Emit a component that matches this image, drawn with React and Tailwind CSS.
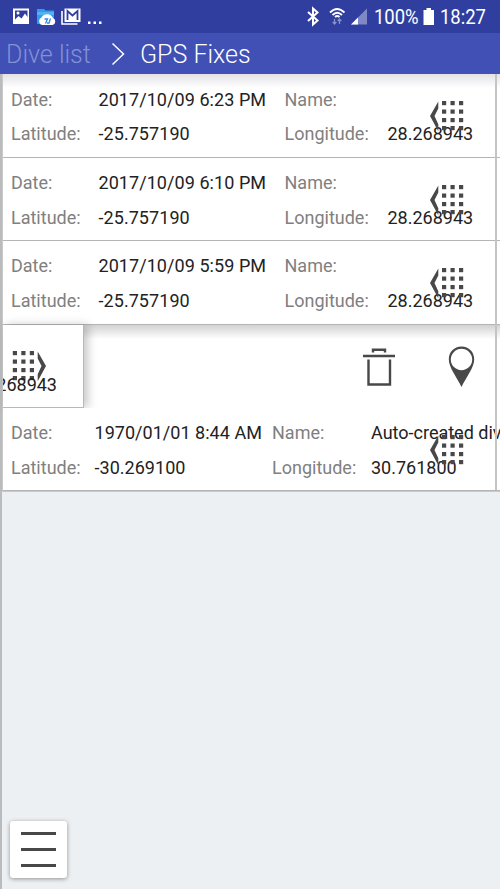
const ROBOTO = "font-[Roboto,'Liberation_Sans',sans-serif]";

function Handle({ flip = false }) {
  const rows = [1, 9.5, 18, 26];
  const cols = [12, 20.5, 29];
  return (
    <svg width="36" height="32" viewBox="0 0 36 32" className={flip ? '-scale-x-100' : ''} fill="#484848">
      <path d="M8.300 1.500V8.500L4.500 16l3.800 8.200v7L0 16Z" />
      {rows.map((y) => cols.map((x) => <rect key={`${x}-${y}`} x={x} y={y} width="4.2" height="4.2" />))}
    </svg>
  );
}

function Label({ children, className }) {
  return <span className={`shrink-0 text-[#808080] ${className}`}>{children}</span>;
}

function Value({ children, className = '' }) {
  return <span className={`shrink-0 text-[#222] ${className}`}>{children}</span>;
}

function FixRow({ date, lat, name, lon, height, wide = true, top = false }) {
  const first = wide ? 'w-[87.5px]' : 'w-[83.5px]';
  const second = wide ? 'w-[186px] tracking-[0.06px]' : 'w-[177.5px] tracking-[0.03px]';
  const third = wide ? 'w-[103px]' : 'w-[99px]';
  return (
    <div
      className={`relative flex flex-col overflow-hidden whitespace-nowrap border-b border-[#b5b5b5] pl-[8px] text-[18px] leading-[34.6px] ${height} ${
        top ? 'bg-[linear-gradient(#e2e2e6,#fff_14px)] pt-[8.5px]' : 'bg-white pt-[8px]'
      }`}
    >
      <div className="flex">
        <Label className={first}>Date:</Label>
        <Value className={second}>{date}</Value>
        <Label className={third}>Name:</Label>
        <Value>{name}</Value>
      </div>
      <div className="flex">
        <Label className={first}>Latitude:</Label>
        <Value className={second}>{lat}</Value>
        <Label className={third}>Longitude:</Label>
        <Value>{lon}</Value>
      </div>
      <div className="absolute left-[427px] top-[26px]">
        <Handle />
      </div>
    </div>
  );
}

function StatusBar() {
  return (
    <div className="flex h-[33px] items-center bg-[#303f9f] text-white">
      <svg width="110" height="33" viewBox="0 0 110 33" className="shrink-0">
        <path fill="#fff" fillRule="evenodd" d="M13 8.500h16V24H13ZM15 10.500v9l3.500-3.500 3 2.500 3.500-5 2.500 3.500v-6.500Z" />
        <circle cx="18" cy="13" r="1.500" fill="#fff" />
        <path d="M37 9h7l1.500 1.500H54V24H37Z" fill="#2e9df0" />
        <path d="M37 12h17v3H37Z" fill="#4fb3f5" />
        <path d="M42 25a4 4 0 0 1-.5-7.500A6.500 6.500 0 0 1 53 18a3.700 3.700 0 0 1-.5 7Z" fill="#fff" />
        <path d="M44.500 19h3l-2 4.500M50.500 18.500l-1.500 4.500h-2" stroke="#2e8be0" strokeWidth="1.300" fill="none" />
        <path d="M62 11v13h15.500" stroke="#fff" strokeWidth="1.600" fill="none" />
        <path d="M64.500 8.500H80.500V22H64.500Z" fill="#fff" />
        <path d="M67.500 20V11l5 4.500 5-4.500v9" stroke="#303f9f" strokeWidth="1.800" fill="none" />
        <path d="M88 21.500h2.500V24H88ZM93.500 21.500H96V24h-2.500ZM99 21.500h2.500V24H99Z" fill="#fff" />
      </svg>
      <svg width="74" height="33" viewBox="0 0 74 33" className="ml-[196px] shrink-0">
        <path d="m2 12 9.500 8.500L7 24.500V8.500l4.500 4L2 21" stroke="#fff" strokeWidth="2" fill="none" />
        <path d="M24 12.500q7-7 14.500 0M26.500 15q4.700-4.500 9.500 0M29 17q2.200-2 4.500 0" stroke="#fff" strokeWidth="1.800" fill="none" />
        <path d="M28.500 19v5m-1.800-2 1.800 2 1.800-2M33.500 24v-5m-1.800 2 1.800-2 1.800 2" stroke="#8790c7" strokeWidth="1.300" fill="none" />
        <path d="M61 8.500V24.500H45Z" fill="#7f89c6" />
        <path d="M52 17.500v7h-7Z" fill="#fff" />
      </svg>
      <span className="-ml-[6px] w-[48px] shrink-0 origin-left scale-x-[0.9] pt-[2px] text-[20.500px] leading-none">100%</span>
      <svg width="12" height="17" viewBox="0 0 12 17" className="ml-[1px] shrink-0" fill="#fff">
        <path d="M3.500 0h4.500v2h3v15H0.500V2h3Z" />
      </svg>
      <span className="ml-[5px] origin-left scale-x-[0.9] pt-[2px] text-[20.500px] leading-none">18:27</span>
    </div>
  );
}

export default function App() {
  return (
    <div className={`flex h-[889px] w-[500px] flex-col overflow-hidden bg-[#edf0f2] ${ROBOTO}`}>
      <StatusBar />
      <div className="flex h-[41px] items-center bg-[#4050b5] pl-[6px] pt-[1px] text-[25px] font-light leading-none text-white">
        <span className="w-[105px] text-[#8490d4]">Dive list</span>
        <svg width="14" height="24" viewBox="0 0 14 24" className="mr-[15px]" fill="none" stroke="#fff" strokeWidth="1.500">
          <path d="m1.500 1.500 11 10.500-11 10.500" />
        </svg>
        <span>GPS Fixes</span>
      </div>
      <div className="relative flex grow flex-col border-l-2 border-[#b9bbbd]">
        <div className="flex flex-col border-b border-l border-[#c9c9c9]">
          <FixRow top height="h-[84px]" date="2017/10/09 6:23 PM" lat="-25.757190" lon="28.268943" />
          <FixRow height="h-[83px]" date="2017/10/09 6:10 PM" lat="-25.757190" lon="28.268943" />
          <FixRow height="h-[84px]" date="2017/10/09 5:59 PM" lat="-25.757190" lon="28.268943" />
          <div className="flex h-[83px] justify-between bg-[linear-gradient(#d2d2d2,#fff_14px)]">
            <div className="relative w-[81px] border-b border-r border-[#b8b8b8] bg-white shadow-[4px_0_9px_rgba(0,0,0,0.22)]">
              <div className="absolute left-[7px] top-[25px]">
                <Handle flip />
              </div>
              <div className="absolute inset-x-0 top-[42px] flex w-[80px] justify-end overflow-hidden pr-[26px] text-[18px] leading-[35px] text-[#202020]">
                28.268943
              </div>
            </div>
            <div className="flex gap-[52px] pr-[25px] pt-[21px]">
              <svg width="34" height="40" viewBox="0 0 34 40" fill="none" stroke="#484848" strokeWidth="2.400">
                <path d="M1 10H33M11 6.500V3.700H23V6.500M6.500 13.500v25H28v-25" />
              </svg>
              <svg width="27" height="42" viewBox="0 0 27 42">
                <path fill="#484848" fillRule="evenodd" d="M13.500 0.500C6 0.500 .8 6 .8 13.300c0 8.700 8 17.700 12.700 27.700 4.700-10 12.700-19 12.700-27.700C26.200 6 21 .5 13.500 .5Zm0 2.300a10.700 10.700 0 1 1 0 21.400 10.700 10.700 0 0 1 0-21.400Z" />
              </svg>
            </div>
          </div>
          <FixRow wide={false} height="h-[83px]" date="1970/01/01 8:44 AM" lat="-30.269100" name="Auto-created dive" lon="30.761800" />
        </div>
        <div className="absolute left-[493px] top-0 h-[416px] w-[2px] bg-[#c4c4c4]" />
        <button aria-label="Menu" className="mb-[11px] ml-[8px] mt-auto flex h-[57px] w-[57px] flex-col items-center justify-center gap-[13px] rounded-[3px] bg-white shadow-[0_1px_4px_rgba(0,0,0,0.4)]">
          <span className="h-[3px] w-[35px] bg-[#484848]" />
          <span className="h-[3px] w-[35px] bg-[#484848]" />
          <span className="h-[3px] w-[35px] bg-[#484848]" />
        </button>
      </div>
    </div>
  );
}
